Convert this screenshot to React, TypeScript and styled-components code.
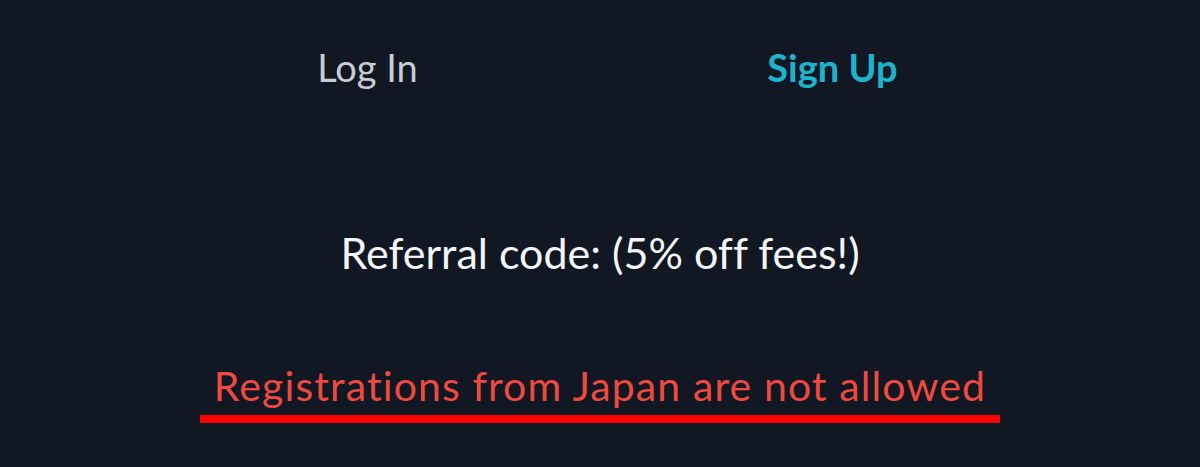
import styled, { createGlobalStyle } from "styled-components";

const GlobalStyle = createGlobalStyle`
  html, body {
    margin: 0;
    padding: 0;
    background: #111723;
  }
  body {
    font-family: Lato, "Noto Sans", sans-serif;
    font-variant-ligatures: none;
  }
`;

const Page = styled.div`
  width: 1200px;
  height: 467px;
  background: #111723;
  display: flex;
  flex-direction: column;
  align-items: center;
  overflow: hidden;
`;

const Tabs = styled.div`
  width: 930px;
  display: grid;
  grid-template-columns: 1fr 1fr;
  padding-top: 43px;
`;

const Tab = styled.div<{ $active?: boolean }>`
  text-align: center;
  font-size: 38px;
  line-height: 48px;
  font-weight: ${(p) => (p.$active ? 700 : 400)};
  color: ${(p) => (p.$active ? "#1fb3cb" : "#c9ccd3")};
`;

const Referral = styled.div`
  margin-top: 136px;
  font-size: 43px;
  line-height: 52px;
  color: #f4f5f7;
`;

const Notice = styled.div`
  margin-top: 83px;
  width: 800px;
  padding-bottom: 5px;
  text-align: center;
  font-size: 41px;
  line-height: 48px;
  letter-spacing: 1.1px;
  color: #ee4a40;
  border-bottom: 8px solid #f00;
`;

export default function App() {
  return (
    <>
      <GlobalStyle />
      <Page>
        <Tabs>
          <Tab>Log In</Tab>
          <Tab $active>Sign Up</Tab>
        </Tabs>
        <Referral>Referral code: (5% off fees!)</Referral>
        <Notice>Registrations from Japan are not allowed</Notice>
      </Page>
    </>
  );
}
